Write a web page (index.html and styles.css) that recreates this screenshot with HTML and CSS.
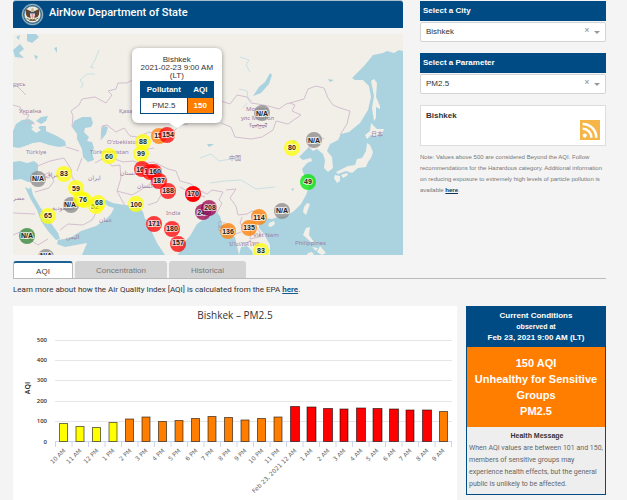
FILE: index.html
```html
<!DOCTYPE html>
<html lang="en">
<head>
  <meta charset="UTF-8">
  <meta name="viewport" content="width=device-width, initial-scale=1.0">
  <title>AirNow Department of State</title>
  <link rel="stylesheet" href="styles.css">
</head>
<body>
  <div class="container">

    <!-- Map + filters -->
    <div class="top-row">
      <div class="main-col">
        <header class="site-header">
          <svg class="seal" viewBox="0 0 46 46" aria-hidden="true">
            <circle cx="23" cy="23" r="22" fill="#3f78a3"/>
            <circle cx="23" cy="23" r="20" fill="#245a86" stroke="#b9c9c8" stroke-width="2"/>
            <circle cx="23" cy="23" r="17" fill="none" stroke="#8fa9b5" stroke-width="1"/>
            <circle cx="23" cy="23" r="16" fill="#eeeade"/>
            <path d="M21 17L10 12Q8 22 13 28L19 30L21 25ZM25 17L36 12Q38 22 33 28L27 30L25 25Z" fill="#60462e"/>
            <path d="M20 12Q23 8 26 12L25 18H21Z" fill="#c8b98c"/>
            <path d="M18 18H28V25Q27 30 23 32Q19 30 18 25Z" fill="#f3eeee"/>
            <path d="M18 18H28V21H18Z" fill="#31547d"/>
            <path d="M20 21V29M23 21V31M26 21V29" stroke="#b84848" stroke-width="1"/>
            <path d="M19 31L16 36H30L27 31L23 33Z" fill="#7b6240"/>
            <path d="M11 31L17 33M29 33L35 30" stroke="#6c8655" stroke-width="2"/>
          </svg>
          <h1>AirNow Department of State</h1>
        </header>

        <div class="map">
          <svg class="map-canvas" viewBox="13 34 390 221" role="img" aria-label="Air quality map">
            <rect class="land" x="13" y="34" width="390" height="221"/>

            <!-- seas -->
            <g class="water">
              <path d="M13 131L16 124L22 120L29 119L34 122L31 126L36 130L40 126L46 126L46 131L57 136L65 141L66 146L59 147L49 145L40 142L33 143L25 146L19 148L13 147Z"/>
              <path d="M36 121L41 117L48 116L46 121L41 124Z"/>
              <path d="M72 127L74 121L82 117L91 117L93 123L91 127L85 128L84 132L89 137L87 141L92 142L94 148L92 152L94 160L88 162L83 157L82 149L77 139L77 134Z"/>
              <path d="M101 131L103 126L108 127L106 134L102 139Z"/>
              <path d="M13 162L20 161L27 163L34 161L38 164L38 173L36 181L28 182L21 179L13 180Z"/>
              <path d="M25 187L29 189L31 187L33 195L40 207L47 217L53 226L58 233L60 239L56 240L48 231L41 221L37 210L30 198Z"/>
              <path d="M74 189L78 190L84 198L92 202L99 202L106 200L113 203L124 205L138 206L143 212L145 219L148 220L151 230L157 243L165 255H82L87 243L76 245L65 247L57 244L58 240L70 238L81 231L96 226L105 220L111 214L114 208L108 206L105 203L101 209L96 207L88 206L80 198Z"/>
              <path d="M178 255L181 246L190 236L197 224L204 219L207 215L215 211L220 216L223 227L227 235L235 237L237 246L239 255Z"/>
              <path d="M241 247L247 246L252 251L253 255H239Z"/>
              <path d="M270 255L270 245L264 234L259 228L259 223L264 218L272 219L278 217L286 216L294 211L301 204L306 195L309 186L305 178L302 169L307 163L312 161L311 158L303 160L299 157L304 152L309 147L313 151L317 149L323 154L325 160L324 168L328 172L333 168L332 157L327 151L330 144L338 140L341 134L349 132L360 123L368 110L371 97L369 86L363 80L355 80L352 78L364 66L373 55L383 53L387 51L394 53L399 50L403 51V255Z"/>
              <path d="M253 96L259 87L265 82L270 73L272 75L269 84L261 93Z"/>
            </g>

            <!-- lakes and rivers -->
            <g class="lakes">
              <path d="M13 50L20 44L24 49L19 53L24 58L15 57ZM16 37L20 35L19 40ZM27 41L32 43L39 37L36 34L27 34ZM34 55L38 56L36 60ZM54 48L57 47L57 53ZM328 79L334 80L330 82ZM292 140L297 141L293 145ZM160 107L164 106L162 109ZM207 144L214 144L209 147ZM291 189L294 188L293 191Z"/>
              <path d="M81 88L83 84L80 80L87 74L95 74M99 50L95 60L91 67M90 67L94 68M239 89L247 91L248 98L252 101M247 103L243 108M240 57L249 60L246 65L250 72M200 158L211 154L219 161L231 159M210 183L225 181L241 180L256 189L275 187"/>
            </g>

            <!-- islands -->
            <g class="land">
              <path d="M371 81L374 79L377 83L376 97L380 106L380 109L376 107L376 118L374 121L372 108L374 96Z"/>
              <path d="M371 123L377 129L384 129L382 134L376 136L371 135L367 139L365 135L370 131Z"/>
              <path d="M367 143L370 145L373 152L371 158L368 162L366 167L358 168L352 173L346 171L338 174L336 172L348 166L355 165L357 159L362 158L366 151Z"/>
              <path d="M341 175L347 173L348 175L343 178ZM335 175L340 176L340 181L337 183L334 178Z"/>
              <path d="M307 203L310 204L306 215L303 212L304 207ZM269 223L274 221L275 224L271 227L268 226ZM306 228L310 227L309 235L314 242L311 242L303 235ZM312 247L318 248L316 251ZM320 246L326 253L322 255L317 252ZM308 253L312 252L314 255H307ZM31 129L36 126L41 130L36 133Z"/>
            </g>

            <!-- borders -->
            <g class="borders">
              <path d="M13 105L20 107L23 114L29 115L25 122M13 87L17 86L26 95M26 122L35 124M72 127L73 116L71 111L79 105L82 99L95 97L106 103L112 95L108 91L116 89L118 83L127 83L132 80"/>
              <path d="M101 140L102 126L107 125L116 132L124 128L130 136L138 137L149 132L157 135L172 134L179 125L188 124M221 123L231 127L235 137L251 139L262 137L273 130L276 121L288 124L301 115L292 111L295 105L290 103L286 104L279 109L268 106L258 104L251 103L247 97L237 95L230 104L221 101"/>
              <path d="M290 103L304 99L308 89L316 86L324 88L328 98L333 105L340 108L350 111L347 124L340 135M308 148L319 137L324 139"/>
              <path d="M38 166L50 161L64 158L71 169L72 177L81 190M40 178L49 172L54 181L49 188L35 192M13 213L35 214M13 235L20 232L29 239L38 245L48 239M60 230L68 224L83 225L92 220L97 211M77 171L82 158M66 147L79 151M95 163L104 158L112 166L120 165L121 178L117 191L125 206M117 191L132 195L139 191L150 184L153 175L158 168L154 162L142 164L133 161L123 162L112 158L106 153M140 141L143 150L154 148M156 163L168 169L176 171L180 181L191 184L199 190L207 194L212 190L223 192L219 200L222 203L217 213M180 187L191 193L205 197M226 190L236 189L230 198L236 206L238 215L247 214L252 211L261 213L264 218M242 217L240 223L245 230L251 227L250 239L259 237L260 232L254 225M223 225L233 235L241 232M148 205L157 202L163 192"/>
            </g>

            <!-- place names -->
            <g class="places">
              <text x="13" y="86">русь</text>
              <text x="19" y="113">Україна</text>
              <text x="119" y="113">Қазақстан</text>
              <text x="246" y="111">Монгол</text>
              <text x="241" y="120">улс Монгол</text>
              <text x="249" y="128">ᠮᠣᠩᠭᠣᠯ</text>
              <text x="26" y="154">Türkiye</text>
              <text x="107" y="144">O‘zbekiston</text>
              <text x="90" y="154">Türkmenistan</text>
              <text x="88" y="180">ایران</text>
              <text x="46" y="177">العراق</text>
              <text x="52" y="210">السعودية</text>
              <text x="99" y="222">عمان</text>
              <text x="66" y="239">اليمن</text>
              <text x="13" y="200">مصر</text>
              <text x="120" y="175">افغانستان</text>
              <text x="137" y="188">پاکستان</text>
              <text x="166" y="215">India</text>
              <text x="229" y="160">中国</text>
              <text x="371" y="136">日本</text>
              <text x="218" y="228">မြန်မာ</text>
              <text x="253" y="237">Việt Nam</text>
              <text x="229" y="246">ประเทศไทย</text>
              <text x="295" y="245">Philippines</text>
            </g>

            <!-- monitors -->
            <g class="monitors">
              <g class="na"><circle cx="262" cy="113" r="8"/><text x="262" y="116">N/A</text></g>
              <g class="na"><circle cx="314" cy="140" r="8"/><text x="314" y="143">N/A</text></g>
              <g class="na"><circle cx="282" cy="211" r="8"/><text x="282" y="213">N/A</text></g>
              <g class="na"><circle cx="38" cy="179" r="8"/><text x="38" y="181">N/A</text></g>
              <g class="na"><circle cx="71" cy="205" r="8"/><text x="70" y="207">N/A</text></g>
              <g class="na"><circle cx="46" cy="257" r="8"/><text x="46" y="258">N/A</text></g>
              <g class="na-green"><circle cx="27" cy="236" r="8"/><text x="27" y="238">N/A</text></g>
              <g class="good"><circle cx="308" cy="182" r="8"/><text x="308" y="184">49</text></g>
              <g class="moderate"><circle cx="292" cy="148" r="8"/><text x="292" y="150">80</text></g>
              <g class="moderate"><circle cx="261" cy="251" r="8"/><text x="261" y="253">83</text></g>
              <g class="moderate"><circle cx="143" cy="142" r="8"/><text x="143" y="144">88</text></g>
              <g class="moderate"><circle cx="141" cy="154" r="8"/><text x="141" y="156">99</text></g>
              <g class="moderate"><circle cx="109" cy="156" r="8"/><text x="109" y="159">60</text></g>
              <g class="moderate"><circle cx="64" cy="174" r="8"/><text x="64" y="176">83</text></g>
              <g class="moderate"><circle cx="76" cy="188" r="8"/><text x="76" y="191">59</text></g>
              <g class="moderate"><circle cx="81" cy="199" r="8"/></g>
              <g class="moderate"><circle cx="84" cy="200" r="8"/><text x="83" y="202">76</text></g>
              <g class="moderate"><circle cx="96" cy="206" r="8"/><text x="95" y="209">52</text></g>
              <g class="moderate"><circle cx="98" cy="203" r="8"/><text x="99" y="205">68</text></g>
              <g class="moderate"><circle cx="48" cy="216" r="8"/><text x="48" y="218">65</text></g>
              <g class="moderate"><circle cx="136" cy="204" r="8"/><text x="136" y="207">100</text></g>
              <g class="sensitive"><circle cx="159" cy="136" r="8"/><text x="160" y="138">151</text></g>
              <g class="sensitive"><circle cx="259" cy="217" r="8"/><text x="259" y="220">114</text></g>
              <g class="sensitive"><circle cx="249" cy="228" r="8"/><text x="249" y="230">135</text></g>
              <g class="sensitive"><circle cx="228" cy="231" r="8"/><text x="228" y="234">136</text></g>
              <g class="unhealthy"><circle cx="167" cy="135" r="8"/><text x="168" y="137">154</text></g>
              <g class="unhealthy"><circle cx="142" cy="169" r="8"/><text x="142" y="172">161</text></g>
              <g class="unhealthy"><circle cx="150" cy="172" r="8"/><text x="150" y="174">151</text></g>
              <g class="unhealthy"><circle cx="154" cy="172" r="8"/><text x="155" y="174">160</text></g>
              <g class="unhealthy"><circle cx="159" cy="181" r="8"/><text x="159" y="183">187</text></g>
              <g class="unhealthy"><circle cx="168" cy="191" r="8"/><text x="168" y="193">188</text></g>
              <g class="unhealthy solid"><circle cx="193" cy="194" r="8"/><text x="193" y="196">170</text></g>
              <g class="unhealthy"><circle cx="154" cy="224" r="8"/><text x="154" y="226">171</text></g>
              <g class="unhealthy"><circle cx="172" cy="229" r="8"/><text x="172" y="231">180</text></g>
              <g class="unhealthy"><circle cx="178" cy="244" r="8"/><text x="178" y="245">157</text></g>
              <g class="very-unhealthy"><circle cx="203" cy="212" r="8"/><text x="203" y="215">240</text></g>
              <g class="very-unhealthy"><circle cx="209" cy="208" r="8"/><text x="210" y="210">208</text></g>
            </g>
          </svg>

          <div class="popup">
            <div>Bishkek</div>
            <div>2021-02-23 9:00 AM</div>
            <div>(LT)</div>
            <table>
              <thead>
                <tr><th>Pollutant</th><th>AQI</th></tr>
              </thead>
              <tbody>
                <tr><td>PM2.5</td><td class="aqi-value">150</td></tr>
              </tbody>
            </table>
          </div>
        </div>
      </div>

      <aside class="side-col">
        <div class="field">
          <label for="city">Select a City</label>
          <div class="select-wrap">
            <select id="city"><option>Bishkek</option></select>
            <button type="button" class="clear" aria-label="Clear city">×</button>
          </div>
        </div>

        <div class="field">
          <label for="parameter">Select a Parameter</label>
          <div class="select-wrap">
            <select id="parameter"><option>PM2.5</option></select>
            <button type="button" class="clear" aria-label="Clear parameter">×</button>
          </div>
        </div>

        <div class="feed">
          <span>Bishkek</span>
          <a href="#" class="rss" aria-label="RSS feed">
            <svg viewBox="0 0 19 19">
              <rect width="19" height="19" fill="#f5b547"/>
              <circle cx="4.500" cy="14.800" r="2" fill="#fff"/>
              <path d="M2.500 8.300A8.200 8.200 0 0 1 10.800 16.800M2.500 3.700A12.800 12.800 0 0 1 15.400 16.800" fill="none" stroke="#fff" stroke-width="2.400"/>
            </svg>
          </a>
        </div>

        <p class="note">Note: Values above 500 are considered Beyond the AQI. Follow recommendations for the Hazardous category. Additional information on reducing exposure to extremely high levels of particle pollution is available <a href="#">here</a>.</p>
      </aside>
    </div>

    <!-- Tabs -->
    <div class="tabs" role="tablist">
      <button type="button" role="tab" aria-selected="true" class="tab active">AQI</button>
      <button type="button" role="tab" aria-selected="false" class="tab wide">Concentration</button>
      <button type="button" role="tab" aria-selected="false" class="tab">Historical</button>
    </div>

    <p class="learn-more">Learn more about how the Air Quality Index [AQI] is calculated from the EPA <a href="#">here</a>.</p>

    <!-- Chart + current conditions -->
    <div class="bottom-row">
      <div class="chart">
        <svg viewBox="13 306 444 194" role="img" aria-label="Bishkek PM2.5 AQI, last 24 hours">
          <text class="chart-title" x="235" y="319">Bishkek – PM2.5</text>

          <path class="grid" d="M55 340.5H452M55 360.5H452M55 380.5H452M55 401.5H452M55 421.5H452"/>
          <path class="axis" d="M55 441.5H452M55.5 442v5M72 442v5M88.5 442v5M105 442v5M121.5 442v5M138 442v5M154.5 442v5M171 442v5M187.5 442v5M204 442v5M220.5 442v5M237 442v5M253.5 442v5M270 442v5M286.5 442v5M303 442v5M319.5 442v5M336 442v5M352.5 442v5M369 442v5M385.5 442v5M402 442v5M418.5 442v5M435 442v5M451.5 442v5"/>

          <g class="y-labels">
            <text x="47" y="342">500</text>
            <text x="47" y="362">400</text>
            <text x="47" y="382">300</text>
            <text x="47" y="403">200</text>
            <text x="47" y="423">100</text>
            <text x="47" y="444">0</text>
          </g>
          <text class="axis-title" transform="translate(30 388) rotate(-90)">AQI</text>

          <g class="bars">
            <g class="moderate">
              <rect x="59.5" y="423.5" width="8" height="18"/>
              <rect x="76" y="426.5" width="8" height="15"/>
              <rect x="92.5" y="427.5" width="8" height="14"/>
              <rect x="109" y="422.5" width="8" height="19"/>
            </g>
            <g class="sensitive">
              <rect x="125.5" y="419" width="8" height="22.5"/>
              <rect x="142" y="417" width="8" height="24.5"/>
              <rect x="158.5" y="421.5" width="8" height="20"/>
              <rect x="175" y="420.5" width="8" height="21"/>
              <rect x="191.5" y="418.5" width="8" height="23"/>
              <rect x="208" y="416.5" width="8" height="25"/>
              <rect x="224.5" y="417.5" width="8" height="24"/>
              <rect x="241" y="420" width="8" height="21.5"/>
              <rect x="257.5" y="418.5" width="8" height="23"/>
              <rect x="274" y="417" width="8" height="24.5"/>
            </g>
            <g class="unhealthy">
              <rect x="290.5" y="406.5" width="9" height="35"/>
              <rect x="307" y="407" width="9" height="34.5"/>
              <rect x="323.5" y="408.5" width="9" height="33"/>
              <rect x="340" y="409" width="8" height="32.5"/>
              <rect x="356.5" y="408" width="9" height="33.5"/>
              <rect x="373" y="408.5" width="9" height="33"/>
              <rect x="389.5" y="409" width="9" height="32.5"/>
              <rect x="406" y="410" width="8" height="31.5"/>
              <rect x="422.5" y="410" width="9" height="31.5"/>
            </g>
            <g class="sensitive">
              <rect x="439.5" y="411.5" width="8" height="30"/>
            </g>
          </g>

          <g class="x-labels">
            <text transform="translate(66 451) rotate(-45)">10 AM</text>
            <text transform="translate(82 451) rotate(-45)">11 AM</text>
            <text transform="translate(99 451) rotate(-45)">12 PM</text>
            <text transform="translate(115 451) rotate(-45)">1 PM</text>
            <text transform="translate(132 451) rotate(-45)">2 PM</text>
            <text transform="translate(148 451) rotate(-45)">3 PM</text>
            <text transform="translate(165 451) rotate(-45)">4 PM</text>
            <text transform="translate(181 451) rotate(-45)">5 PM</text>
            <text transform="translate(198 451) rotate(-45)">6 PM</text>
            <text transform="translate(214 451) rotate(-45)">7 PM</text>
            <text transform="translate(231 451) rotate(-45)">8 PM</text>
            <text transform="translate(247 451) rotate(-45)">9 PM</text>
            <text transform="translate(264 451) rotate(-45)">10 PM</text>
            <text transform="translate(280 451) rotate(-45)">11 PM</text>
            <text transform="translate(297 451) rotate(-45)">Feb 23, 2021 12 AM</text>
            <text transform="translate(313 451) rotate(-45)">1 AM</text>
            <text transform="translate(330 451) rotate(-45)">2 AM</text>
            <text transform="translate(346 451) rotate(-45)">3 AM</text>
            <text transform="translate(363 451) rotate(-45)">4 AM</text>
            <text transform="translate(379 451) rotate(-45)">5 AM</text>
            <text transform="translate(396 451) rotate(-45)">6 AM</text>
            <text transform="translate(412 451) rotate(-45)">7 AM</text>
            <text transform="translate(429 451) rotate(-45)">8 AM</text>
            <text transform="translate(445 451) rotate(-45)">9 AM</text>
          </g>
        </svg>
      </div>

      <section class="conditions">
        <div class="conditions-head">
          <h2>Current Conditions</h2>
          <div class="observed">observed at</div>
          <div>Feb 23, 2021 9:00 AM (LT)</div>
        </div>
        <div class="conditions-aqi">
          <div>150 AQI</div>
          <div>Unhealthy for Sensitive Groups</div>
          <div>PM2.5</div>
        </div>
        <div class="conditions-msg">
          <h3>Health Message</h3>
          <p>When AQI values are between 101 and 150, members of sensitive groups may experience health effects, but the general public is unlikely to be affected.</p>
        </div>
      </section>
    </div>

  </div>
</body>
</html>
```
FILE: styles.css
```css
* {
  box-sizing: border-box;
}

body {
  margin: 0;
  background: #f4f4f4;
  color: #333;
  font-family: "Liberation Sans", Arial, sans-serif;
  font-size: 8px;
}

h1, h2, h3, p {
  margin: 0;
}

a {
  color: #1c5a8c;
  font-weight: bold;
}

.container {
  padding: 0 21px 0 13px;
}

.top-row {
  display: grid;
  grid-template-columns: 390fr 186fr;
  gap: 17px;
}

/* Header */
.site-header {
  display: flex;
  align-items: center;
  gap: 5px;
  height: 28px;
  padding-left: 8px;
  background: #004b83;
  border-top: 1px solid #a9bfcf;
  border-radius: 3px 3px 0 0;
  color: #fff;
}

.site-header h1 {
  padding-bottom: 3px;
  font-family: Roboto, sans-serif;
  font-size: 11px;
  font-weight: 500;
  line-height: 14px;
}

.seal {
  width: 23px;
  height: 23px;
}

/* Map */
.map {
  position: relative;
  margin-top: 6px;
}

.map-canvas {
  display: block;
  width: 100%;
}

.land {
  fill: #f2efe9;
}

.water {
  fill: #aad3df;
}

.lakes path {
  fill: #aad3df;
}

.lakes path + path {
  fill: none;
  stroke: #c9e1e4;
  stroke-width: 1;
}

.borders {
  fill: none;
  stroke: #d3bfd0;
  stroke-width: 1;
}

.places text {
  fill: #9d7fa2;
  font-family: "Noto Sans", "DejaVu Sans", "Noto Sans CJK SC", sans-serif;
  font-size: 6px;
}

.monitors circle {
  fill-opacity: 0.75;
}

.monitors text {
  fill: #222;
  stroke: #fff;
  stroke-width: 2px;
  stroke-opacity: 0.7;
  paint-order: stroke;
  font-size: 7px;
  font-weight: bold;
  text-anchor: middle;
}

.na { fill: #888; }
.na-green { fill: #2d8030; }
.good { fill: #00e400; }
.moderate { fill: #ffff00; }
.sensitive { fill: #ff7e00; }
.unhealthy { fill: #ff0000; }
.very-unhealthy { fill: #99004c; }

.monitors .solid circle {
  fill-opacity: 1;
}

/* Popup sits over the map, above the Bishkek marker */
.popup {
  position: absolute;
  top: 14px;
  left: 42%;
  width: 90px;
  margin-left: -45px;
  padding: 8px 8px 9px;
  background: #fff;
  border-radius: 6px;
  box-shadow: 0 1px 5px rgba(0, 0, 0, 0.4);
  font-size: 8px;
  line-height: 8px;
  text-align: center;
  white-space: nowrap;
}

.popup::after {
  content: "";
  position: absolute;
  top: 100%;
  left: 50%;
  margin-left: -8px;
  border: 8px solid transparent;
  border-top: 5px solid #fff;
  border-bottom: 0;
}

.popup table {
  width: 100%;
  margin-top: 1px;
  border-collapse: collapse;
}

.popup th,
.popup td {
  height: 16px;
  padding: 0;
  border: 1px solid #004b83;
}

.popup th {
  background: #004b83;
  color: #fff;
}

.popup th + th {
  width: 26px;
}

.popup .aqi-value {
  background: #ff7e00;
  color: #fff;
  font-weight: bold;
}

/* Filters */
.side-col {
  padding-top: 1px;
}

.field {
  margin-bottom: 11px;
}

.field label {
  display: block;
  height: 20px;
  padding-left: 3px;
  background: #004b83;
  color: #fff;
  font-weight: bold;
  line-height: 19px;
}

.select-wrap {
  position: relative;
  margin-top: 1px;
}

.select-wrap::after {
  content: "";
  position: absolute;
  top: 9px;
  right: 6px;
  border: 3px solid transparent;
  border-top-color: #999;
  border-bottom: 0;
}

.field select {
  display: block;
  width: 100%;
  height: 20px;
  padding: 0 30px 1px 5px;
  appearance: none;
  background: #fff;
  border: 1px solid #d4d4d4;
  border-radius: 2px;
  color: #333;
  font: 8px "Liberation Sans", Arial, sans-serif;
}

.clear {
  position: absolute;
  top: 3px;
  right: 15px;
  width: 8px;
  height: 10px;
  padding: 0;
  background: none;
  border: 0;
  color: #888;
  font-size: 9px;
  line-height: 10px;
}

.feed {
  display: flex;
  justify-content: space-between;
  height: 41px;
  padding: 5px;
  background: #fff;
  border: 1px solid #ddd;
  font-weight: bold;
}

.rss {
  align-self: flex-end;
  width: 20px;
  height: 20px;
}

.rss svg {
  display: block;
}

.note {
  margin-top: 6px;
  color: #777;
  font-size: 6px;
  line-height: 11px;
}

.note a {
  color: #0c3557;
}

/* Tabs */
.tabs {
  display: flex;
  gap: 2px;
  margin-top: 6px;
  border-bottom: 1px solid #bbb;
}

.tab {
  width: 77px;
  height: 17px;
  padding: 2px 0 0;
  background: #d3d3d3;
  border: 0;
  border-radius: 3px 3px 0 0;
  color: #777;
  font: 8px "Liberation Sans", Arial, sans-serif;
}

.tab.wide {
  width: 92px;
}

.tab.active {
  width: 60px;
  background: #fff;
  border: 1px solid #bbb;
  border-top: 2px solid #1c6295;
  border-bottom: 0;
  color: #444;
}

.learn-more {
  margin: 6px 0 11px;
  font-family: Roboto, sans-serif;
  font-size: 8px;
  line-height: 10px;
}

/* Chart */
.bottom-row {
  display: grid;
  grid-template-columns: 444fr 140fr;
  gap: 9px;
  align-items: start;
}

.chart {
  background: #fff;
}

.chart svg {
  display: block;
  width: 100%;
  font-family: "Open Sans", "Noto Sans", sans-serif;
}

.chart-title {
  fill: #333;
  font-size: 10px;
  text-anchor: middle;
}

.grid {
  stroke: #e6e6e6;
}

.axis {
  stroke: #ccd6eb;
}

.y-labels text {
  fill: #333;
  font-size: 6px;
  font-weight: 600;
  text-anchor: end;
}

.axis-title {
  fill: #222;
  font-size: 7px;
  font-weight: 600;
  text-anchor: middle;
}

.x-labels text {
  fill: #666;
  font-family: "DejaVu Sans", sans-serif;
  font-size: 6px;
  text-anchor: end;
}

.bars rect {
  stroke: #000;
  stroke-opacity: 0.55;
}

/* Current conditions */
.conditions {
  border: 1px solid #004b83;
  background: #eee;
  text-align: center;
}

.conditions-head {
  padding: 3px 0 4px;
  background: #004b83;
  color: #fff;
  font-weight: bold;
  line-height: 11px;
}

.conditions-head h2 {
  font-size: 8px;
}

.conditions-head .observed {
  font-size: 7px;
}

.conditions-aqi {
  padding: 8px 5px;
  background: #ff7e00;
  color: #fff;
  font-size: 11px;
  font-weight: bold;
  line-height: 16px;
}

.conditions-msg {
  padding: 3px 0 4px 2px;
}

.conditions-msg h3 {
  font-size: 7px;
  line-height: 12px;
}

.conditions-msg p {
  color: #666;
  font-family: Roboto, sans-serif;
  font-size: 7px;
  line-height: 12px;
  text-align: left;
}
```
